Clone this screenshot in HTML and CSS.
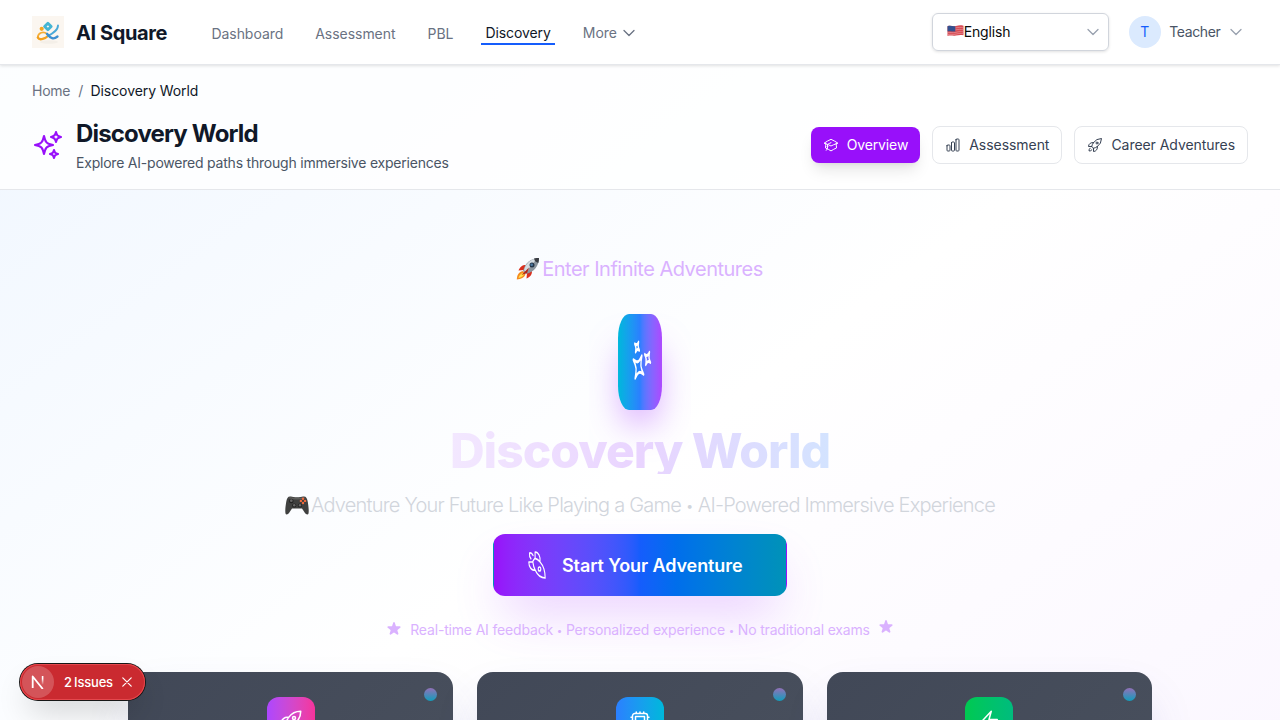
FILE: index.html
```html
<!DOCTYPE html>
<html lang="en">
<head>
<meta charset="utf-8">
<title>Discovery World - AI Square</title>
<link rel="stylesheet" href="styles.css">
</head>
<body>
<svg class="defs" width="0" height="0" aria-hidden="true">
  <symbol id="sparkles" viewBox="0 0 24 24"><path d="M9.813 15.904 9 18.75l-.813-2.846a4.5 4.5 0 0 0-3.09-3.09L2.25 12l2.846-.813a4.5 4.5 0 0 0 3.09-3.09L9 5.25l.813 2.846a4.5 4.5 0 0 0 3.09 3.09L15.75 12l-2.846.813a4.5 4.5 0 0 0-3.09 3.09ZM18.259 8.715 18 9.75l-.259-1.035a3.375 3.375 0 0 0-2.455-2.456L14.25 6l1.036-.259a3.375 3.375 0 0 0 2.455-2.456L18 2.25l.259 1.035a3.375 3.375 0 0 0 2.456 2.456L21.75 6l-1.035.259a3.375 3.375 0 0 0-2.456 2.456ZM16.894 20.567 16.5 21.75l-.394-1.183a2.25 2.25 0 0 0-1.423-1.423L13.5 18.75l1.183-.394a2.25 2.25 0 0 0 1.423-1.423l.394-1.183.394 1.183a2.25 2.25 0 0 0 1.423 1.423l1.183.394-1.183.394a2.25 2.25 0 0 0-1.423 1.423Z"/></symbol>
  <symbol id="rocket" viewBox="0 0 24 24"><path d="M15.59 14.37a6 6 0 0 1-5.84 7.38v-4.8m5.84-2.58a14.98 14.98 0 0 0 6.16-12.12A14.98 14.98 0 0 0 9.631 8.41m5.96 5.96a14.926 14.926 0 0 1-5.841 2.58m-.119-8.54a6 6 0 0 0-7.381 5.84h4.8m2.581-5.84a14.927 14.927 0 0 0-2.58 5.84m2.699 2.7c-.103.021-.207.041-.311.06a15.09 15.09 0 0 1-2.448-2.448 14.9 14.9 0 0 1 .06-.312m-2.24 2.39a4.493 4.493 0 0 0-1.757 4.306 4.493 4.493 0 0 0 4.306-1.758M16.5 9a1.5 1.5 0 1 1-3 0 1.5 1.5 0 0 1 3 0Z"/></symbol>
  <symbol id="star" viewBox="1 1 18 18"><path d="M9.049 2.927c.3-.921 1.603-.921 1.902 0l1.07 3.292a1 1 0 0 0 .95.69h3.462c.969 0 1.371 1.24.588 1.81l-2.8 2.034a1 1 0 0 0-.364 1.118l1.07 3.292c.3.921-.755 1.688-1.54 1.118l-2.8-2.034a1 1 0 0 0-1.175 0l-2.8 2.034c-.784.57-1.838-.197-1.539-1.118l1.07-3.292a1 1 0 0 0-.364-1.118L2.98 8.72c-.783-.57-.38-1.81.588-1.81h3.461a1 1 0 0 0 .951-.69z"/></symbol>
  <symbol id="chevron" viewBox="0 0 12 12"><path d="M1 3.5 6 8.5 11 3.5"/></symbol>
</svg>

<header class="topbar">
  <svg class="logo" viewBox="0 0 32 32" fill="none">
    <rect width="32" height="32" fill="#fbf6f0"/>
    <ellipse cx="17" cy="26" rx="9" ry="1.800" fill="#f4efe8"/>
    <path d="M15.900 7.200 19.200 10.500 15.900 13.800 12.600 10.500Z" stroke="#45b5d3" stroke-width="2.800"/>
    <circle cx="9.700" cy="12.800" r="2.100" fill="#f5a623"/>
    <path d="M5.800 21.500C6 16.500 11.500 15 15 18" stroke="#f5ad35" stroke-width="1.800"/>
    <path d="M5.800 21.500C7.500 25 13.500 22.500 16.500 19.500" stroke="#f2a01e" stroke-width="2.300"/>
    <path d="M16 20C20.500 17.500 26 14.500 26 9.500" stroke="#4aa9d8" stroke-width="1.900"/>
    <path d="M15 17.800C18.500 22.500 21.500 23.800 25.500 20.500" stroke="#3d8fd1" stroke-width="2.300"/>
  </svg>
  <span class="brand">AI Square</span>
  <nav class="nav">
    <a>Dashboard</a><a>Assessment</a><a>PBL</a><a class="active">Discovery</a>
    <a class="more">More <svg class="chev"><use href="#chevron"/></svg></a>
  </nav>
  <div class="select">
    <svg class="flag" viewBox="0 0 17 12">
      <path d="M.5 1.2C4 .2 6 1.8 9 1 12 .2 14 .2 16.500.8V10.300C14 9.700 12 9.800 9 10.600 6 11.400 4 10 .5 11Z" fill="#d94a52"/>
      <path d="M8 3C11 2.200 14 2.200 16.500 2.800M8 5C11 4.200 14 4.200 16.500 4.800M.5 7.800C4 6.800 6 8.400 9 7.300 12 6.500 14 6.400 16.500 6.900M.5 9.600C4 8.600 6 10.200 9 9.100 12 8.300 14 8.200 16.500 8.700" stroke="#e8a0a6" stroke-width=".6" fill="none"/>
      <path d="M.5 1.200C4 .2 6 1.800 8.300 1.100V6.400C6 7 4 5.800.5 6.600Z" fill="#33508f"/>
    </svg>
    <span>English</span>
    <svg class="chev light"><use href="#chevron"/></svg>
  </div>
  <div class="user">
    <span class="avatar">T</span><span>Teacher</span>
    <svg class="chev light"><use href="#chevron"/></svg>
  </div>
</header>

<section class="pagehead">
  <div class="crumbs"><span>Home</span><span>/</span><b>Discovery World</b></div>
  <div class="headrow">
    <svg class="headicon"><use href="#sparkles"/></svg>
    <div class="titles">
      <h1>Discovery World</h1>
      <p>Explore AI-powered paths through immersive experiences</p>
    </div>
    <div class="tabs">
      <a class="tab on"><svg viewBox="0 0 24 24"><path d="M4.26 10.147a60.438 60.438 0 0 0-.491 6.347A48.62 48.62 0 0 1 12 20.904a48.62 48.62 0 0 1 8.232-4.41 60.46 60.46 0 0 0-.491-6.347m-15.482 0a50.636 50.636 0 0 0-2.658-.813A59.906 59.906 0 0 1 12 3.493a59.903 59.903 0 0 1 10.399 5.84c-.896.248-1.783.52-2.658.814m-15.482 0A50.717 50.717 0 0 1 12 13.489a50.702 50.702 0 0 1 7.74-3.342M6.75 15a.75.75 0 1 0 0-1.5.75.75 0 0 0 0 1.5Zm0 0v-3.675A55.378 55.378 0 0 1 12 8.443m-7.007 11.55A5.981 5.981 0 0 0 6.75 15.75v-1.5"/></svg>Overview</a>
      <a class="tab"><svg viewBox="0 0 24 24"><path d="M3 13.125C3 12.504 3.504 12 4.125 12h2.25c.621 0 1.125.504 1.125 1.125v6.75C7.5 20.496 6.996 21 6.375 21h-2.25A1.125 1.125 0 0 1 3 19.875v-6.75ZM9.75 8.625c0-.621.504-1.125 1.125-1.125h2.25c.621 0 1.125.504 1.125 1.125v11.25c0 .621-.504 1.125-1.125 1.125h-2.25a1.125 1.125 0 0 1-1.125-1.125V8.625ZM16.5 4.125c0-.621.504-1.125 1.125-1.125h2.25C20.496 3 21 3.504 21 4.125v15.75c0 .621-.504 1.125-1.125 1.125h-2.25a1.125 1.125 0 0 1-1.125-1.125V4.125Z"/></svg>Assessment</a>
      <a class="tab"><svg><use href="#rocket"/></svg>Career Adventures</a>
    </div>
  </div>
</section>

<main class="hero">
  <div class="eyebrow">
    <svg viewBox="0 0 24 24">
      <path d="M7 14C2 15 1 19 .8 22.5 5 22 8.500 21 9.500 17Z" fill="#f58a1f"/>
      <path d="M6.500 16C4 17 3 19 2.500 21 5 20.500 7 19.500 8 17.500Z" fill="#ffe14d"/>
      <path d="M10 8C6 8 4 10 2.500 13.500L8 13ZM16 14C16 18 14 20 10.500 21.500L11 16Z" fill="#d9301f"/>
      <path d="M7 14C9 6 15 1 23 1 23 9 18 15 10 17Z" fill="#8c969e"/>
      <path d="M8 13C10 6 15 2 21 1.500L10 15Z" fill="#d5dce1"/>
      <path d="M18 1.600C19.600 1 21.500 1 23 1 23 2.600 22.800 4.500 22.300 6 20 5.500 18.500 4 18 1.600Z" fill="#3a3d43"/>
      <circle cx="16" cy="8" r="2.500" fill="#25364a"/><circle cx="15.700" cy="7.700" r="1.300" fill="#4e7ba3"/>
      <path d="M5.500 18 13 10.500 11 16Z" fill="#b32418"/>
    </svg><span>Enter Infinite Adventures</span>
  </div>
  <div class="emblem"><svg><use href="#sparkles"/></svg></div>
  <h2>Discovery World</h2>
  <div class="tagline">
    <svg viewBox="0 0 24 24">
      <path d="M6 3.500C3 3 1.800 5 1.200 9 .4 14 0 18 .5 20.500 1 22.500 3.500 21.500 5 18.500L7 15.500H17L19 18.500C20.500 21.500 23 22.500 23.500 20.500 24 18 23.600 14 22.800 9 22.200 5 21 3 18 3.500 16 4.400 8 4.400 6 3.500Z" fill="#3f403f"/>
      <path d="M3 5C6 3 8 5.300 12 5 16 5.300 18 3 21 5 15 7 9 7 3 5Z" fill="#5d5d5b"/>
      <circle cx="6.300" cy="8" r="2.300" fill="#222"/><circle cx="6.300" cy="7.700" r="1.400" fill="#666"/>
      <circle cx="9.200" cy="12.500" r="2.100" fill="#222"/><circle cx="9.200" cy="12.200" r="1.200" fill="#686868"/>
      <circle cx="15" cy="12.500" r="2.100" fill="#222"/><circle cx="15" cy="12.200" r="1.200" fill="#686868"/>
      <g fill="#f26a3d"><circle cx="18" cy="5.800" r="1.200"/><circle cx="18" cy="10" r="1.200"/><circle cx="15.900" cy="7.900" r="1.200"/><circle cx="20.100" cy="7.900" r="1.200"/></g>
    </svg><span>Adventure Your Future Like Playing a Game <i class="bullet">•</i> AI-Powered Immersive Experience</span>
  </div>
  <button class="cta"><svg><use href="#rocket"/></svg><span>Start Your Adventure</span></button>
  <div class="notes">
    <svg><use href="#star"/></svg><span>Real-time AI feedback <i class="bullet">•</i> Personalized experience <i class="bullet">•</i> No traditional exams</span><svg class="up"><use href="#star"/></svg>
  </div>
  <div class="cards">
    <article class="card violet"><i class="dot"></i><div class="tile"><svg><use href="#rocket"/></svg></div></article>
    <article class="card blue"><i class="dot"></i><div class="tile"><svg viewBox="0 0 24 24"><path d="M8.250 3v1.500M4.500 8.250H3m18 0h-1.500M4.500 12H3m18 0h-1.500m-15 3.750H3m18 0h-1.500M8.250 19.500V21M12 3v1.500m0 15V21m3.750-18v1.500m0 15V21m-9-1.500h10.500a2.250 2.250 0 0 0 2.250-2.250V6.750a2.250 2.250 0 0 0-2.250-2.250H6.750A2.250 2.250 0 0 0 4.500 6.750v10.500a2.250 2.250 0 0 0 2.250 2.250Zm.750-12h9v9h-9v-9Z"/></svg></div></article>
    <article class="card green"><i class="dot"></i><div class="tile"><svg viewBox="0 0 24 24"><path d="m3.750 13.500 10.500-11.250L12 10.500h8.250L9.750 21.750 12 13.500H3.750Z"/></svg></div></article>
  </div>
</main>

<div class="toast">
  <span class="mark"><svg viewBox="0 0 14 14" fill="none"><defs><linearGradient id="fade" gradientUnits="userSpaceOnUse" x1="0" y1="1" x2="0" y2="10"><stop offset=".3" stop-color="#fff"/><stop offset="1" stop-color="#fff" stop-opacity="0"/></linearGradient></defs><path d="M1.700 13V1.500L11.800 14" stroke="#fff" stroke-width="1.800"/><path d="M11.600 1V9.500" stroke="url(#fade)" stroke-width="1.600"/></svg></span>
  <span class="count">2 Issues</span>
  <svg class="close" viewBox="0 0 10 10"><path d="M.8.800 9.200 9.200M9.200.800.800 9.200"/></svg>
</div>
</body>
</html>
```
FILE: styles.css
```css
* { box-sizing: border-box; margin: 0; padding: 0; }
body {
  width: 1280px; height: 720px; overflow: hidden; position: relative;
  font: 14px/20px Inter, "Liberation Sans", sans-serif; color: #101828;
  background: #faf5ff linear-gradient(to bottom right, #eff6ff, #fff 50%, #faf5ff) 0 0 / 1280px 940px no-repeat;
}
svg { display: block; flex: none; fill: none; stroke: currentColor; stroke-width: 1.5; stroke-linecap: round; stroke-linejoin: round; }
svg.defs { position: absolute; }
.topbar {
  height: 65px; padding: 0 38px 1px 32px; display: flex; align-items: center;
  background: #fff; border-bottom: 1px solid #e5e7eb; box-shadow: 0 1px 3px rgba(0,0,0,.12);
  position: relative;
}
.logo { width: 32px; height: 32px; stroke: none; }
.brand { margin-left: 12px; width: 91px; font-size: 20px; line-height: 28px; font-weight: 700; white-space: nowrap; letter-spacing: -.4px; padding-top: 2px; }
.nav { display: flex; align-items: center; gap: 24px; margin-left: 40.4px; color: #6a7282; padding-top: 4px; letter-spacing: -.04px; }
.nav a { padding: 0 4px; }
.nav .active { color: #101828; border-bottom: 2px solid #155dfc; letter-spacing: -.08px; }
.nav .more { display: flex; align-items: center; gap: 6px; padding-bottom: 2px; }
.chev { width: 12px; height: 12px; stroke-width: 1.3; }
.light { color: #99a1af; }
.select {
  margin-left: auto; width: 177px; height: 38px; padding: 0 9px 0 14px; display: flex; align-items: center;
  border: 1px solid #d1d5dc; border-radius: 6px; box-shadow: 0 1px 3px rgba(0,0,0,.12); color: #0a0a0a; letter-spacing: -.15px;
}
.flag { width: 17px; height: 12px; stroke: none; margin-top: -1px; }
.select .chev { margin-left: auto; }
.user { display: flex; align-items: center; margin-left: 20px; color: #4a5565; letter-spacing: -.35px; }
.avatar { width: 32px; height: 32px; border-radius: 50%; background: #dbeafe; color: #155dfc; line-height: 32px; text-align: center; margin-right: 8.5px; }
.user .chev { margin-left: 9.5px; }

.pagehead { height: 125px; padding: 16px 32px 0; background: rgba(255,255,255,.8); border-bottom: 1px solid #e5e7eb; }
.crumbs { display: flex; gap: 8px; color: #6a7282; letter-spacing: -.25px; }
.crumbs b { font-weight: 400; color: #101828; margin-left: -.5px; letter-spacing: -.08px; }
.headrow { display: flex; align-items: center; margin-top: 16px; }
.headicon { width: 32px; height: 32px; color: #9810fa; margin-right: 12px; stroke-width: 1.6; }
.titles h1 { font-size: 24px; line-height: 32px; font-weight: 700; letter-spacing: -.84px; padding-top: 1px; }
.titles p { color: #4a5565; margin-top: 3px; letter-spacing: -.215px; }
.tabs { display: flex; align-items: center; gap: 12px; margin-left: auto; }
.tab { display: flex; align-items: center; gap: 8px; padding: 8px 12px; border: 1px solid #e5e7eb; border-radius: 8px; background: #fff; color: #364153; letter-spacing: -.05px; }
.tab svg { width: 16px; height: 16px; }
.tab.on { border: 0; background: #9810fa; color: #fff; letter-spacing: -.13px; box-shadow: 0 10px 15px -3px rgba(0,0,0,.1), 0 4px 6px -4px rgba(0,0,0,.1); }

.hero { display: flex; flex-direction: column; align-items: center; height: 530px; overflow: hidden; padding-top: 64px; }
.bullet { font-style: normal; font-size: .7em; vertical-align: .1em; line-height: 1; }
.eyebrow { display: flex; align-items: center; gap: 2px; margin-right: 1px; font-size: 20px; line-height: 30px; color: #dab2ff; letter-spacing: -.5px; }
.eyebrow svg { width: 24px; height: 24px; stroke: none; }
.emblem {
  width: 96px; height: 96px; flex: none; margin-top: 30px; border-radius: 24px; display: grid; place-items: center; color: #fff;
  transform: scaleX(.458);
  background: linear-gradient(to right in oklab, #00b8db, #2b7fff, #ad46ff);
  box-shadow: 0 25px 50px -12px rgba(173,70,255,.5);
}
.emblem svg { width: 48px; height: 48px; transform: rotate(-57deg) scaleY(-1); }
.hero h2 {
  margin-top: 16px; flex: none; height: 48px; font-size: 48px; line-height: 50px; font-weight: 800; letter-spacing: -1px; color: transparent;
  background: linear-gradient(to right in oklab, #f3e8ff, #e9d4ff 50%, #d3e3ff); background-clip: text; -webkit-background-clip: text;
  position: relative;
}
.tagline { display: flex; align-items: center; gap: 2px; margin-top: 16px; font-size: 20px; line-height: 30px; font-weight: 300; color: #d1d5dc; letter-spacing: -.785px; white-space: nowrap; }
.tagline svg { width: 24px; height: 24px; stroke: none; }
.cta {
  width: 294px; height: 62px; flex: none; margin-top: 14px; padding: 0 0 0 27px; display: flex; align-items: center; gap: 9px;
  border: 1px solid transparent; border-radius: 12px; color: #fff; font: 600 18px/28px Inter, sans-serif; letter-spacing: -.1px;
  background: linear-gradient(to right in oklab, #9810fa, #155dfc, #0092b8);
  box-shadow: 0 25px 50px -12px rgba(173,70,255,.3);
}
.cta svg { width: 32px; height: 32px; stroke-width: 1.3; transform: scaleX(.63) rotate(90deg); }
.cta span { padding-top: 2px; }
.notes { display: flex; align-items: center; gap: 8px; margin-top: 24px; color: #dab2ff; white-space: nowrap; letter-spacing: -.17px; }
.notes svg { width: 16px; height: 16px; fill: currentColor; stroke: none; margin-top: -2px; }
.notes svg.up { margin-top: -6px; }
.cards { width: 1024px; margin-top: 32px; display: grid; grid-template-columns: repeat(3, 1fr); gap: 24px; }
.card { position: relative; height: 220px; padding-top: 25px; border-radius: 16px; background: linear-gradient(135deg, #414857, #4a515e); box-shadow: 0 25px 50px -12px rgba(80,80,180,.25); }
.dot { position: absolute; top: 16px; right: 16.5px; width: 13px; height: 13px; border-radius: 50%; background: linear-gradient(#ad7bd6, #00b8db); opacity: .75; }
.tile { width: 48px; height: 48px; margin: 0 auto; border-radius: 12px; display: grid; place-items: center; color: #fff; }
.tile svg { width: 24px; height: 24px; }
.violet .tile { background: linear-gradient(to right in oklab, #ad46ff, #f6339a); }
.blue .tile { background: linear-gradient(to right in oklab, #2b7fff, #00b8db); }
.green .tile { background: linear-gradient(to right in oklab, #00c950, #00bc7d); }

.toast {
  position: absolute; left: 20px; top: 664px; width: 125px; height: 36px; padding: 2px; display: flex; align-items: center;
  border-radius: 18px; background: #ca2a30; color: #fff; font-size: 13px; font-weight: 500;
  box-shadow: 0 0 0 1px #171717, inset 0 0 0 1px #e5484d, 0 16px 32px -8px rgba(0,0,0,.24);
}
.mark { width: 32px; height: 32px; border-radius: 50%; background: rgba(255,255,255,.2); display: grid; place-items: center; }
.mark svg { width: 14px; height: 14px; stroke-linecap: butt; }
.count { margin-left: 10px; letter-spacing: -.2px; word-spacing: -1px; white-space: nowrap; }
.close { width: 10px; height: 10px; margin-left: 9px; stroke-width: 1.2; }
```
